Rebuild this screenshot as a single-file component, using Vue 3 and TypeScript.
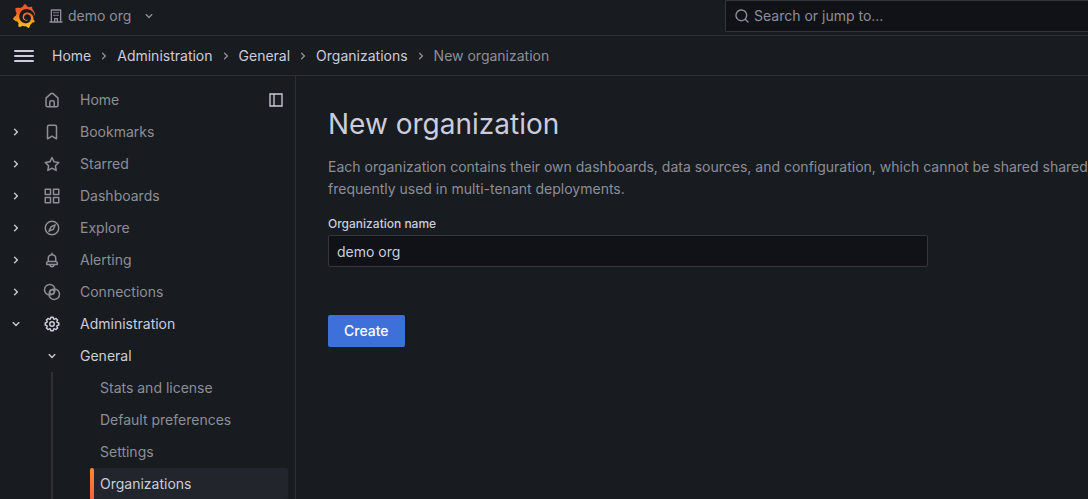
<script setup lang="ts">
import { ref } from 'vue'

interface NavItem {
  label: string
  icon: string
  expandable: boolean
  open?: boolean
}

const icons: Record<string, string> = {
  right:
    'M14.83,11.29,10.59,7.05a1,1,0,0,0-1.42,0,1,1,0,0,0,0,1.41L12.71,12,9.17,15.54a1,1,0,0,0,0,1.41,1,1,0,0,0,.71.29,1,1,0,0,0,.71-.29l4.24-4.24A1,1,0,0,0,14.83,11.29Z',
  down:
    'M17,9.17a1,1,0,0,0-1.41,0L12,12.71,8.46,9.17a1,1,0,0,0-1.41,0,1,1,0,0,0,0,1.42l4.24,4.24a1,1,0,0,0,1.42,0L17,10.59A1,1,0,0,0,17,9.17Z',
  home:
    'M20,8h0L14,2.74a3,3,0,0,0-4,0L4,8a3,3,0,0,0-1,2.26V19a3,3,0,0,0,3,3H18a3,3,0,0,0,3-3V10.25A3,3,0,0,0,20,8ZM14,20H10V15a1,1,0,0,1,1-1h2a1,1,0,0,1,1,1Zm5-1a1,1,0,0,1-1,1H16V15a3,3,0,0,0-3-3H11a3,3,0,0,0-3,3v5H6a1,1,0,0,1-1-1V10.25a1,1,0,0,1,.34-.75l6-5.25a1,1,0,0,1,1.32,0l6,5.25a1,1,0,0,1,.34.75Z',
  bookmark:
    'M16,2H8A3,3,0,0,0,5,5V21a1,1,0,0,0,.5.87,1,1,0,0,0,1,0L12,18.69l5.5,3.18A1,1,0,0,0,18,22a1,1,0,0,0,.5-.13A1,1,0,0,0,19,21V5A3,3,0,0,0,16,2Zm1,17.27-4.5-2.6a1,1,0,0,0-1,0L7,19.27V5A1,1,0,0,1,8,4h8a1,1,0,0,1,1,1Z',
  star:
    'M22,9.67A1,1,0,0,0,21.14,9l-5.69-.83L12.9,3a1,1,0,0,0-1.8,0L8.55,8.16,2.86,9a1,1,0,0,0-.81.68,1,1,0,0,0,.25,1l4.13,4-1,5.68A1,1,0,0,0,6.9,21.44L12,18.77l5.1,2.67a.93.93,0,0,0,.46.12,1,1,0,0,0,.59-.19,1,1,0,0,0,.4-1l-1-5.68,4.13-4A1,1,0,0,0,22,9.67Zm-6.15,4a1,1,0,0,0-.29.88l.72,4.2-3.76-2a1.06,1.06,0,0,0-.94,0l-3.76,2,.72-4.2a1,1,0,0,0-.29-.88l-3-3,4.21-.61a1,1,0,0,0,.76-.55L12,5.7l1.88,3.82a1,1,0,0,0,.76.55l4.21.61Z',
  apps:
    'M10,13H3a1,1,0,0,0-1,1v7a1,1,0,0,0,1,1h7a1,1,0,0,0,1-1V14A1,1,0,0,0,10,13ZM9,20H4V15H9ZM21,2H14a1,1,0,0,0-1,1v7a1,1,0,0,0,1,1h7a1,1,0,0,0,1-1V3A1,1,0,0,0,21,2ZM20,9H15V4h5Zm1,4H14a1,1,0,0,0-1,1v7a1,1,0,0,0,1,1h7a1,1,0,0,0,1-1V14A1,1,0,0,0,21,13Zm-1,7H15V15h5ZM10,2H3A1,1,0,0,0,2,3v7a1,1,0,0,0,1,1h7a1,1,0,0,0,1-1V3A1,1,0,0,0,10,2ZM9,9H4V4H9Z',
  compass:
    'M12,2A10,10,0,1,0,22,12,10,10,0,0,0,12,2Zm0,18a8,8,0,1,1,8-8A8,8,0,0,1,12,20ZM15.8,6.9l-5.2,2.3a1,1,0,0,0-.5.5L7,15.8a1,1,0,0,0,1.3,1.3L14.2,14.6a1,1,0,0,0,.5-.5L17.1,8.2A1,1,0,0,0,15.8,6.9ZM13.1,13L10,14.3L11.7,10.9L14.3,9.8Z',
  bell:
    'M18,13.18V10a6,6,0,0,0-5-5.91V3a1,1,0,0,0-2,0V4.09A6,6,0,0,0,6,10v3.18A3,3,0,0,0,4,16v2a1,1,0,0,0,1,1H8.14a4,4,0,0,0,7.72,0H19a1,1,0,0,0,1-1V16A3,3,0,0,0,18,13.18ZM8,10a4,4,0,0,1,8,0v3H8Zm4,10a2,2,0,0,1-1.72-1h3.44A2,2,0,0,1,12,20Zm6-3H6V16a1,1,0,0,1,1-1H17a1,1,0,0,1,1,1Z',
  cog:
    'M21.32,9.55l-1.89-.63.89-1.78A1,1,0,0,0,20.13,6L18,3.87a1,1,0,0,0-1.15-.19l-1.78.89-.63-1.89A1,1,0,0,0,13.5,2h-3a1,1,0,0,0-.95.68L8.92,4.57,7.14,3.68A1,1,0,0,0,6,3.87L3.87,6a1,1,0,0,0-.19,1.15l.89,1.78-1.89.63A1,1,0,0,0,2,10.5v3a1,1,0,0,0,.68.95l1.89.63-.89,1.78A1,1,0,0,0,3.87,18L6,20.13a1,1,0,0,0,1.15.19l1.78-.89.63,1.89a1,1,0,0,0,.95.68h3a1,1,0,0,0,.95-.68l.63-1.89,1.78.89A1,1,0,0,0,18,20.13L20.13,18a1,1,0,0,0,.19-1.15l-.89-1.78,1.89-.63A1,1,0,0,0,22,13.5v-3A1,1,0,0,0,21.32,9.55ZM20,12.78l-1.2.4A2,2,0,0,0,17.64,16l.57,1.14-1.1,1.1L16,17.64a2,2,0,0,0-2.79,1.16l-.4,1.2H11.22l-.4-1.2A2,2,0,0,0,8,17.64l-1.14.57-1.1-1.1L6.36,16A2,2,0,0,0,5.2,13.18L4,12.78V11.22l1.2-.4A2,2,0,0,0,6.36,8L5.79,6.89l1.1-1.1L8,6.36A2,2,0,0,0,10.82,5.2l.4-1.2h1.56l.4,1.2A2,2,0,0,0,16,6.36l1.14-.57,1.1,1.1L17.64,8a2,2,0,0,0,1.16,2.79l1.2.4ZM12,8a4,4,0,1,0,4,4A4,4,0,0,0,12,8Zm0,6a2,2,0,1,1,2-2A2,2,0,0,1,12,14Z',
  search:
    'M21.71,20.29,18,16.61A9,9,0,1,0,16.61,18l3.68,3.68a1,1,0,0,0,1.42,0A1,1,0,0,0,21.71,20.29ZM11,18a7,7,0,1,1,7-7A7,7,0,0,1,11,18Z',
}

const crumbs = ['Home', 'Administration', 'General', 'Organizations']

const navItems: NavItem[] = [
  { label: 'Home', icon: 'home', expandable: false },
  { label: 'Bookmarks', icon: 'bookmark', expandable: true },
  { label: 'Starred', icon: 'star', expandable: true },
  { label: 'Dashboards', icon: 'apps', expandable: true },
  { label: 'Explore', icon: 'compass', expandable: true },
  { label: 'Alerting', icon: 'bell', expandable: true },
  { label: 'Connections', icon: 'connections', expandable: true },
  { label: 'Administration', icon: 'cog', expandable: true, open: true },
]

const generalPages = ['Stats and license', 'Default preferences', 'Settings', 'Organizations']
const activePage = 'Organizations'
const orgName = ref('demo org')
const query = ref('')
</script>

<template>
  <div class="app">
    <header class="topbar">
      <a href="#" class="logo" aria-label="Grafana">
        <svg viewBox="0 0 351 365" width="24" height="24">
          <defs>
            <linearGradient id="flame" gradientUnits="userSpaceOnUse" x1="175" y1="445" x2="175" y2="114">
              <stop offset="0" stop-color="#fff100" />
              <stop offset="1" stop-color="#f05a28" />
            </linearGradient>
          </defs>
          <path
            fill="url(#flame)"
            d="M342 161.2c-.6-6.1-1.6-13.1-3.6-20.9-2-7.7-5-16.2-9.4-25-4.4-8.8-10.1-17.9-17.5-26.8-2.9-3.5-6.1-6.9-9.5-10.2 5.1-20.3-6.2-37.9-6.2-37.9-19.5-1.2-31.9 6.1-36.5 9.4-.8-.3-1.5-.7-2.3-1-3.3-1.3-6.7-2.6-10.3-3.7-3.5-1.1-7.1-2.1-10.8-3-3.7-.9-7.4-1.6-11.2-2.2-.7-.1-1.3-.2-2-.3-8.5-27.2-32.9-38.6-32.9-38.6-27.3 17.3-32.4 41.5-32.4 41.5s-.1.5-.3 1.4c-1.5.4-3 .9-4.5 1.3-2.1.6-4.2 1.4-6.2 2.2-2.1.8-4.1 1.6-6.2 2.5-4.1 1.8-8.2 3.8-12.2 6-3.9 2.2-7.7 4.6-11.4 7.1-.5-.2-1-.4-1-.4-37.8-14.4-71.3 2.9-71.3 2.9-3.1 40.2 15.1 65.5 18.7 70.1-.9 2.5-1.7 5-2.5 7.5-2.8 9.1-4.9 18.4-6.2 28.1-.2 1.4-.4 2.8-.5 4.2C18.8 192.7 8.5 228 8.5 228c29.1 33.5 63.1 35.6 63.1 35.6 4.3 7.7 9.3 15 14.9 21.9 2.4 2.9 4.8 5.6 7.4 8.3-10.6 30.4 1.5 55.6 1.5 55.6 32.4 1.2 53.7-14.2 58.2-17.7 3.2 1.1 6.5 2.1 9.8 2.9 10 2.6 20.2 4.1 30.4 4.5 2.5.1 5.1.2 7.6.1h5.2c15.3 21.8 42.1 24.9 42.1 24.9 19.1-20.1 20.2-40.1 20.2-44.4v-1.8c4-2.8 7.8-5.8 11.4-9.1 7.6-6.9 14.3-14.8 19.9-23.3.5-.8 1-1.6 1.5-2.4 21.6 1.2 36.9-13.4 36.9-13.4-3.6-22.5-16.4-33.5-19.1-35.6l-1-.7c.1-1.4.2-2.7.3-4.1.2-2.4.2-4.9.2-7.3v-3.8l-.2-3.5c-.1-1.3-.3-2.6-.4-3.8l-.5-3.8c-.4-2.5-.8-4.9-1.4-7.4-2.3-9.7-6.1-18.9-11-27.2-5-8.3-11.2-15.6-18.3-21.8-7-6.2-14.9-11.2-23.1-14.9-8.3-3.7-16.9-6.1-25.5-7.2-4.3-.6-8.6-.8-12.9-.7l-3.2 0-3.3.2c-2.2.2-4.4.5-6.5.9-8.6 1.6-16.7 4.7-23.8 9-7.1 4.3-13.3 9.6-18.3 15.6-5 6-8.9 12.7-11.6 19.6-2.7 6.9-4.2 14.1-4.6 21-.1 1.7-.1 3.5-.1 5.2l.1 2.7c.1.8.1 1.7.2 2.5.3 3.5 1 6.9 1.9 10.1 1.9 6.5 4.9 12.4 8.6 17.4 3.7 5 8.2 9.1 12.9 12.4 4.7 3.2 9.8 5.5 14.8 7 5 1.5 10 2.1 14.7 2.1l3.5-.1 5-.5c1.1-.2 2.2-.4 3.3-.7 1.1-.2 2.1-.6 3.1-.9 2-.7 4-1.5 5.7-2.4 1.8-.9 3.4-2 5-3 .4-.3.9-.6 1.3-1 1.6-1.3 1.9-3.7.6-5.3-1.1-1.4-3.1-1.8-4.7-.9-.4.2-.8.4-1.2.6-1.4.7-2.8 1.3-4.3 1.8-1.5.5-3.1.9-4.7 1.2-.8.1-1.6.2-2.5.3l-2.5.1-2.7-.1-1.3-.1-1.4-.2c-3.7-.5-7.4-1.6-10.9-3.2-3.6-1.6-7-3.8-10.1-6.6-3.1-2.8-5.8-6.1-7.9-9.9-2.1-3.8-3.6-8-4.3-12.4-.3-2.2-.5-4.5-.4-6.7l.1-2.6.1-.9c.1-1.2.3-2.4.5-3.6 1.7-9.6 6.5-19 13.9-26.1 1.9-1.8 3.9-3.4 6-4.9 2.1-1.5 4.4-2.8 6.8-3.9 2.4-1.1 4.8-2 7.4-2.7 2.5-.7 5.1-1.1 7.8-1.4 1.3-.1 2.6-.2 4-.2h3.1l1.1.1c2.9.2 5.7.6 8.5 1.3 5.6 1.2 11.1 3.3 16.2 6.1 10.2 5.7 18.9 14.5 24.2 25.1 2.7 5.3 4.6 11 5.5 16.9.2 1.5.4 3 .5 4.5l.2 2.2v4.3l-.1 2.6c-.1 1.6-.3 3.3-.5 4.9-.2 1.6-.5 3.2-.8 4.8-.3 1.6-.7 3.2-1.1 4.7-.8 3.1-1.8 6.2-3 9.3-2.4 6-5.6 11.8-9.4 17.1-7.7 10.6-18.2 19.2-30.2 24.7-6 2.7-12.3 4.7-18.8 5.7-3.2.6-6.5.9-9.8 1h-5c-1.8 0-3.5-.1-5.3-.3-7-.5-13.9-1.8-20.7-3.7-6.7-1.9-13.2-4.6-19.4-7.8-12.3-6.6-23.4-15.6-32-26.5-4.3-5.4-8.1-11.3-11.2-17.4-3.1-6.1-5.6-12.6-7.4-19.1-1.8-6.6-2.9-13.3-3.4-20.1l-.1-1.3v-8.3c.1-3.3.4-6.8.8-10.2.4-3.4 1-6.9 1.7-10.3.7-3.4 1.5-6.8 2.5-10.2 1.9-6.7 4.3-13.2 7.1-19.3 5.7-12.2 13.1-23.1 22-31.8 2.2-2.2 4.5-4.2 6.9-6.2 2.4-1.9 4.9-3.7 7.5-5.4 2.5-1.7 5.2-3.2 7.9-4.6 1.3-.7 2.7-1.4 4.1-2l4.2-1.8c2.8-1.2 5.7-2.2 8.7-3.1l4.4-1.3c1.5-.4 3-.8 4.5-1.1l6.9-1.4 4.6-.7 5.2-.6 3.2-.3 4.5-.3 3.2-.1c2.9-.1 5.9-.1 8.8 0 5.8.2 11.5.9 17 1.9 11.1 2.1 21.5 5.6 31 10.3 9.5 4.6 17.9 10.3 25.3 16.5l2.7 2.4 5.1 4.8 2.4 2.5c3.1 3.3 6 6.6 8.6 10 5.2 6.7 9.4 13.5 12.7 19.9l1.2 2.4 2.2 4.7 1 2.3c1.2 3 2.4 5.9 3.3 8.6 1.5 4.4 2.6 8.3 3.5 11.7.3 1.4 1.6 2.3 3 2.1 1.5-.1 2.6-1.3 2.6-2.8.1-4.5 0-8.8-.5-13.7z"
          />
        </svg>
      </a>
      <button type="button" class="org">
        <svg class="icon" viewBox="0 0 24 24">
          <path d="M21,20H20V3a1,1,0,0,0-1-1H5A1,1,0,0,0,4,3V20H3a1,1,0,0,0,0,2H21a1,1,0,0,0,0-2Zm-8,0H11V17h2Zm5,0H15V16a1,1,0,0,0-1-1H10a1,1,0,0,0-1,1v4H6V4H18Z" />
          <path d="M8 6h2v2H8zM11 6h2v2h-2zM14 6h2v2h-2zM8 10h2v2H8zM11 10h2v2h-2zM14 10h2v2h-2z" />
        </svg>
        <span>demo org</span>
        <svg class="icon org-caret" viewBox="0 0 24 24"><path :d="icons.down" /></svg>
      </button>
      <label class="search">
        <svg class="icon" viewBox="0 0 24 24"><path :d="icons.search" /></svg>
        <input v-model="query" type="text" placeholder="Search or jump to..." aria-label="Search or jump to" />
      </label>
    </header>

    <div class="crumbbar">
      <button type="button" class="menu" aria-label="Toggle menu">
        <svg viewBox="0 0 24 24" width="24" height="24">
          <path d="M3 6h18a1 1 0 0 1 0 2H3a1 1 0 0 1 0-2zM3 11h18a1 1 0 0 1 0 2H3a1 1 0 0 1 0-2zM3 16h18a1 1 0 0 1 0 2H3a1 1 0 0 1 0-2z" />
        </svg>
      </button>
      <nav class="crumbs" aria-label="Breadcrumbs">
        <template v-for="crumb in crumbs" :key="crumb">
          <a href="#">{{ crumb }}</a>
          <svg class="icon" viewBox="0 0 24 24"><path :d="icons.right" /></svg>
        </template>
        <span aria-current="page">New organization</span>
      </nav>
    </div>

    <div class="body">
      <nav class="sidebar" aria-label="Main">
        <ul>
          <li v-for="item in navItems" :key="item.label" class="row" :class="{ current: item.open }">
            <button v-if="item.expandable" type="button" class="toggle" :aria-label="`Toggle ${item.label}`">
              <svg class="icon" viewBox="0 0 24 24"><path :d="item.open ? icons.down : icons.right" /></svg>
            </button>
            <span v-else class="toggle"></span>
            <a href="#" class="link">
              <svg v-if="item.icon === 'connections'" class="icon large outline" viewBox="0 0 24 24">
                <circle cx="9" cy="9" r="7" />
                <circle cx="15" cy="15" r="7" />
                <circle cx="12" cy="12" r="3" />
              </svg>
              <svg v-else class="icon large" viewBox="0 0 24 24"><path fill-rule="evenodd" :d="icons[item.icon]" /></svg>
              <span>{{ item.label }}</span>
            </a>
            <button v-if="item.icon === 'home'" type="button" class="dock" aria-label="Undock menu">
              <svg class="icon" viewBox="0 0 24 24">
                <path fill-rule="evenodd" d="M2 2h20v20H2zM4 4v16h4V4zM10 4v16h10V4z" />
              </svg>
            </button>
          </li>
        </ul>
        <div class="row section current">
          <button type="button" class="toggle" aria-label="Toggle General">
            <svg class="icon" viewBox="0 0 24 24"><path :d="icons.down" /></svg>
          </button>
          <a href="#">General</a>
        </div>
        <ul class="children">
          <li v-for="page in generalPages" :key="page">
            <a href="#" class="child" :class="{ active: page === activePage }">{{ page }}</a>
          </li>
        </ul>
      </nav>

      <main>
        <h1>New organization</h1>
        <p>
          Each organization contains their own dashboards, data sources, and configuration, which cannot be shared shared<br />
          frequently used in multi-tenant deployments.
        </p>
        <form @submit.prevent>
          <label for="org-name">Organization name</label>
          <input id="org-name" v-model="orgName" type="text" />
          <button type="submit">Create</button>
        </form>
      </main>
    </div>
  </div>
</template>

<style>
html,
body {
  background: #181b1f;
  overflow: hidden;
}
</style>

<style scoped>
.app {
  --text: #ccccdc;
  --muted: #8e8e99;
  --line: #2e3036;
  height: 100vh;
  display: flex;
  flex-direction: column;
  overflow: hidden;
  background: #181b1f;
  color: var(--text);
  font-family: Inter, 'Liberation Sans', sans-serif;
  font-size: 14px;
  line-height: 22px;
}
* {
  box-sizing: border-box;
}
button,
input {
  font: inherit;
  color: inherit;
}
button {
  padding: 0;
  border: 0;
  background: none;
}
a {
  color: inherit;
  text-decoration: none;
}
ul {
  list-style: none;
  margin: 0;
  padding: 0;
}
svg {
  display: block;
  flex: none;
  fill: currentColor;
}
.icon {
  width: 16px;
  height: 16px;
}
.large {
  width: 18px;
  height: 18px;
}
.outline {
  fill: none;
  stroke: currentColor;
  stroke-width: 2;
}
.topbar {
  flex: none;
  display: grid;
  grid-template-columns: 48px 1fr minmax(0, 363px);
  align-items: center;
  height: 36px;
  padding-bottom: 3px;
  border-bottom: 1px solid var(--line);
}
.logo {
  padding-left: 12px;
}
.org {
  display: flex;
  align-items: center;
  justify-self: start;
  gap: 4px;
  color: var(--muted);
}
.org-caret {
  margin-left: 6px;
}
.search {
  display: flex;
  align-items: center;
  gap: 4px;
  height: 32px;
  padding-left: 8px;
  border: 1px solid #36373d;
  border-right: 0;
  border-radius: 2px 0 0 2px;
  background: #111217;
  color: var(--muted);
}
.search input {
  flex: 1;
  min-width: 0;
  padding: 0;
  border: 0;
  outline: 0;
  background: none;
}
.search input::placeholder {
  color: var(--muted);
  opacity: 1;
}
.crumbbar {
  flex: none;
  display: flex;
  align-items: center;
  height: 40px;
  padding-left: 12px;
  gap: 16px;
  border-bottom: 1px solid var(--line);
}
.crumbs {
  display: flex;
  align-items: center;
  gap: 5px;
  color: var(--muted);
}
.crumbs a {
  color: var(--text);
}
.body {
  flex: 1;
  min-height: 0;
  display: flex;
}
.sidebar {
  flex: none;
  width: 296px;
  padding: 8px 7px 0 0;
  border-right: 1px solid var(--line);
  color: var(--muted);
  overflow: hidden;
}
.row {
  display: flex;
  align-items: center;
  height: 32px;
  padding-left: 8px;
}
.toggle {
  width: 16px;
  color: var(--text);
}
.link {
  display: flex;
  align-items: center;
  flex: 1;
  gap: 19px;
  padding-left: 19px;
}
.dock {
  padding-right: 4px;
  color: var(--text);
}
.current {
  color: var(--text);
}
.section {
  padding-left: 44px;
  gap: 20px;
}
.children {
  margin-left: 51px;
  border-left: 2px solid var(--line);
  padding-left: 37px;
}
.child {
  position: relative;
  display: block;
  height: 32px;
  padding: 5px 0 5px 10px;
}
.active {
  color: var(--text);
  background: #22252b;
  border-radius: 2px;
}
.active::before {
  content: '';
  position: absolute;
  left: 0;
  top: 0;
  bottom: 0;
  width: 4px;
  border-radius: 2px;
  background: linear-gradient(#ff8833, #f55f3e);
}
main {
  flex: 1;
  min-width: 0;
  padding: 32px 0 0 32px;
  overflow: hidden;
}
h1 {
  margin: 0 0 16px;
  font-size: 28px;
  line-height: 32px;
  font-weight: 400;
}
p {
  margin: 0 0 16px;
  color: var(--muted);
  white-space: nowrap;
}
form {
  display: flex;
  flex-direction: column;
  align-items: flex-start;
}
form label {
  margin-bottom: 3px;
  font-size: 12px;
  line-height: 16px;
  font-weight: 500;
}
form input {
  width: 600px;
  max-width: 100%;
  height: 32px;
  padding: 0 8px;
  border: 1px solid #36373d;
  border-radius: 2px;
  outline: 0;
  background: #111217;
}
form button {
  height: 32px;
  margin-top: 48px;
  padding: 0 16px;
  border-radius: 2px;
  background: #3d71d9;
  color: #fff;
  font-weight: 500;
}
</style>
